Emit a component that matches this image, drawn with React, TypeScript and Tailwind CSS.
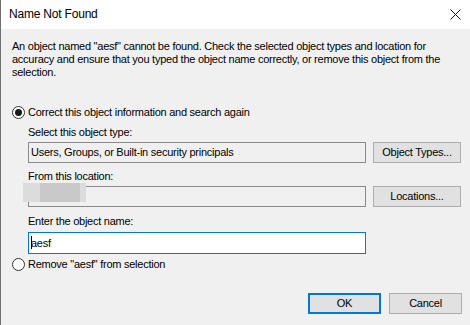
import { useState } from "react";

const font = { fontFamily: '"Liberation Sans", Arial, sans-serif' };

const Radio = ({ checked }: { checked: boolean }) => (
  <span className="w-[13px] h-[13px] rounded-full border border-[#333333] bg-white flex items-center justify-center shrink-0">
    {checked && <span className="w-[7px] h-[7px] rounded-full bg-[#1a1a1a]" />}
  </span>
);

const Button = ({
  label,
  primary,
}: {
  label: string;
  primary?: boolean;
}) => (
  <button
    className={`w-[73px] h-[21px] text-black bg-[#e1e1e1] flex items-center justify-center ${
      primary ? "border-2 border-[#0078d7]" : "border border-[#adadad]"
    }`}
  >
    {label}
  </button>
);

const App = () => {
  const [choice, setChoice] = useState(0);
  return (
    <div
      className="w-[470px] h-[325px] bg-[#f0f0f0] border-l border-[#707070] flex flex-col text-[11px] tracking-[-0.25px] leading-[13px] text-black overflow-hidden"
      style={font}
    >
      <div className="h-[29px] bg-white flex items-center justify-between pl-[8px] pr-[8px] shrink-0">
        <span className="text-[12px] tracking-[-0.2px]">Name Not Found</span>
        <svg width="11" height="11" viewBox="0 0 11 11" className="mr-[1px]">
          <path d="M0.5 0.5 L10.5 10.5 M10.5 0.5 L0.5 10.5" stroke="#111" strokeWidth="1" />
        </svg>
      </div>

      <div className="pl-[11px] flex flex-col">
        <p className="mt-[11px] leading-[13px] whitespace-nowrap">
          An object named "aesf" cannot be found. Check the selected object types and location for
          <br />
          accuracy and ensure that you typed the object name correctly, or remove this object from the
          <br />
          selection.
        </p>

        <label
          className="mt-[26px] h-[14px] flex items-center gap-[3px]"
          onClick={() => setChoice(0)}
        >
          <Radio checked={choice === 0} />
          <span>Correct this object information and search again</span>
        </label>

        <div className="pl-[16px] flex flex-col">
          <div className="mt-[6px] h-[14px] flex items-center">Select this object type:</div>
          <div className="mt-[3px] flex gap-[7px]">
            <div className="w-[338px] h-[21px] border border-[#8a8a8a] flex items-center pl-[2px]">
              Users, Groups, or Built-in security principals
            </div>
            <button className="w-[88px] h-[21px] bg-[#e1e1e1] border border-[#adadad] flex items-center justify-center">
              Object Types...
            </button>
          </div>

          <div className="mt-[6px] h-[14px] flex items-center">From this location:</div>
          <div className="mt-[3px] flex gap-[7px] relative">
            <div className="w-[338px] h-[21px] border border-[#8a8a8a]" />
            <button className="w-[88px] h-[21px] bg-[#e1e1e1] border border-[#adadad] flex items-center justify-center">
              Locations...
            </button>
            <div className="absolute left-[-5px] top-[-3px] w-[63px] h-[19px] bg-[#dcdcdc] flex">
              <div className="ml-[17px] w-[40px] h-full bg-[#c8c9c8]" />
            </div>
          </div>

          <div className="mt-[7px] h-[14px] flex items-center">Enter the object name:</div>
          <div className="mt-[4px] w-[338px] h-[22px] bg-white border border-[#0078d7] flex items-center pl-[2px] relative">
            <span className="absolute left-[2px] top-[3px] w-[1px] h-[13px] bg-black" />
            <span>aesf</span>
          </div>
        </div>

        <label
          className="mt-[3px] h-[14px] flex items-center gap-[3px]"
          onClick={() => setChoice(1)}
        >
          <Radio checked={choice === 1} />
          <span>Remove "aesf" from selection</span>
        </label>

        <div className="mt-[22px] flex justify-end gap-[8px] pr-[8px]">
          <Button label="OK" primary />
          <Button label="Cancel" />
        </div>
      </div>
    </div>
  );
};

export default App;
